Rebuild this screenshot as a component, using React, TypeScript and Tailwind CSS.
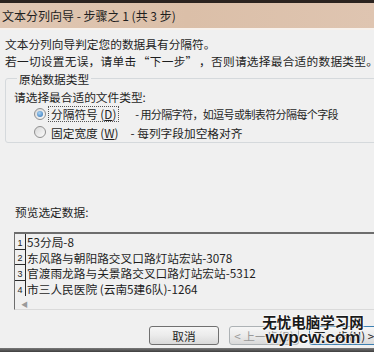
import React from "react";

const rows = [
  "53分局-8",
  "东风路与朝阳路交叉口路灯站宏站-3078",
  "官渡雨龙路与关景路交叉口路灯站宏站-5312",
  "市三人民医院 (云南5建6队)-1264",
];

const Radio = ({ checked }: { checked?: boolean }) => (
  <span className="flex h-[12px] w-[12px] items-center justify-center rounded-full border border-[#8f8f8f] bg-gradient-to-br from-[#d8d8d8] to-[#fbfbfb]">
    {checked && (
      <span className="h-[6px] w-[6px] rounded-full bg-[radial-gradient(circle_at_40%_35%,#a9d3f5,#2a6fb4)]" />
    )}
  </span>
);

const Button = ({
  label,
  disabled,
  primary,
}: {
  label: string;
  disabled?: boolean;
  primary?: boolean;
}) => (
  <div
    className={`flex h-[19px] w-[70px] shrink-0 items-center justify-center rounded-[3px] border bg-gradient-to-b from-[#f6f6f6] via-[#ebebeb] to-[#d9d9d9] ${
      primary ? "border-[#3c7fb1]" : disabled ? "border-[#adb2b5]" : "border-[#707070]"
    } ${disabled ? "text-[#9a9a9a]" : "text-[#1e1e1e]"}`}
  >
    {label}
  </div>
);

export default function App() {
  return (
    <div className="relative flex h-[352px] w-[374px] flex-col overflow-hidden bg-[#f0f0f0] font-['Noto_Sans_CJK_SC','Liberation_Sans',sans-serif] text-[11.7px] leading-[17px] text-[#1e1e1e]">
      {/* title bar */}
      <div className="h-[30px] border-t-[3px] border-[#2b231f] bg-[#f7f1ec]">
        <div className="flex h-[25px] items-center bg-gradient-to-r from-[#e0c7b3] via-[#dbbfa8] to-[#dfc5b1] pl-[2px] text-[12px]">
          文本分列向导 - 步骤之 1 (共 3 步)
        </div>
      </div>

      <div className="flex flex-1 flex-col px-[5px]">
        <p className="mt-[5px]">文本分列向导判定您的数据具有分隔符。</p>
        <p className="mr-[-5px] whitespace-nowrap tracking-[0.25px]">
          若一切设置无误，请单击
          <span className="inline-block w-[1.15em] text-right">“</span>
          下一步
          <span className="inline-block w-[1.15em] text-left">”</span>
          ，否则请选择最合适的数据类型。
        </p>

        <fieldset className="mt-[1px] mr-[-8px] rounded-[3px] border border-[#d5d9dc] pb-[1px] pl-[8px]">
          <legend className="ml-[3px] px-[2px]">原始数据类型</legend>
          <p className="mt-[1px]">请选择最合适的文件类型:</p>
          <div className="flex h-[18px] items-center whitespace-nowrap">
            <span className="ml-[20px]">
              <Radio checked />
            </span>
            <span className="ml-[2px] border border-dotted border-[#555] px-[2px] leading-[14px]">
              分隔符号 (<u>D</u>)
            </span>
            <span className="ml-[16px] text-[11px] tracking-[-0.6px]">
              - 用分隔字符，如逗号或制表符分隔每个字段
            </span>
          </div>
          <div className="flex h-[18px] items-center whitespace-nowrap">
            <span className="ml-[20px]">
              <Radio />
            </span>
            <span className="ml-[5px]">固定宽度 (<u>W</u>)</span>
            <span className="ml-[12px]">- 每列字段加空格对齐</span>
          </div>
        </fieldset>

        <p className="mt-[60px] pl-[10px]">预览选定数据:</p>

        <div className="mt-[12px] ml-[9px] mr-[-20px] h-[78px] border-t-2 border-l border-b border-t-[#6d6d6d] border-l-[#6d6d6d] border-b-[#dadada]">
          {rows.map((r, i) => (
            <div key={i} className="flex h-[15.5px] items-stretch whitespace-nowrap">
              <span
                className={`flex w-[11px] items-end justify-center border-r border-[#2a2a2a] font-['Liberation_Sans',sans-serif] text-[9px] leading-[11px] ${
                  i < 3 ? "border-b" : ""
                }`}
              >
                {i + 1}
              </span>
              <span className="pl-[1px] leading-[15px]">{r}</span>
            </div>
          ))}
          <div className="mt-[4px] pl-[6px] text-[7px] leading-[8px] text-[#9a9a9a]">◀</div>
        </div>

        <div className="mt-[16px] flex gap-[10px] pl-[144px]">
          <Button label="取消" />
          <Button label="< 上一步(B)" disabled />
          <Button label="下一步(N) >" primary />
        </div>
      </div>

      <div className="mt-auto h-[4px] bg-gradient-to-b from-[#7a7a7a] to-[#3e3e3e]" />

      {/* watermark */}
      <div className="absolute top-[315px] left-[262px] flex w-[102px] flex-col items-center font-bold leading-none text-[#1a1a1a] [text-shadow:0_0_2px_#fff,0_0_2px_#fff,0_0_2px_#fff]">
        <span className="text-[14.5px] font-['Noto_Sans_CJK_SC',sans-serif]">无忧电脑学习网</span>
        <span className="mt-[-1px] text-[17px] font-['Liberation_Sans',sans-serif]">wypcw.com</span>
      </div>
    </div>
  );
}
